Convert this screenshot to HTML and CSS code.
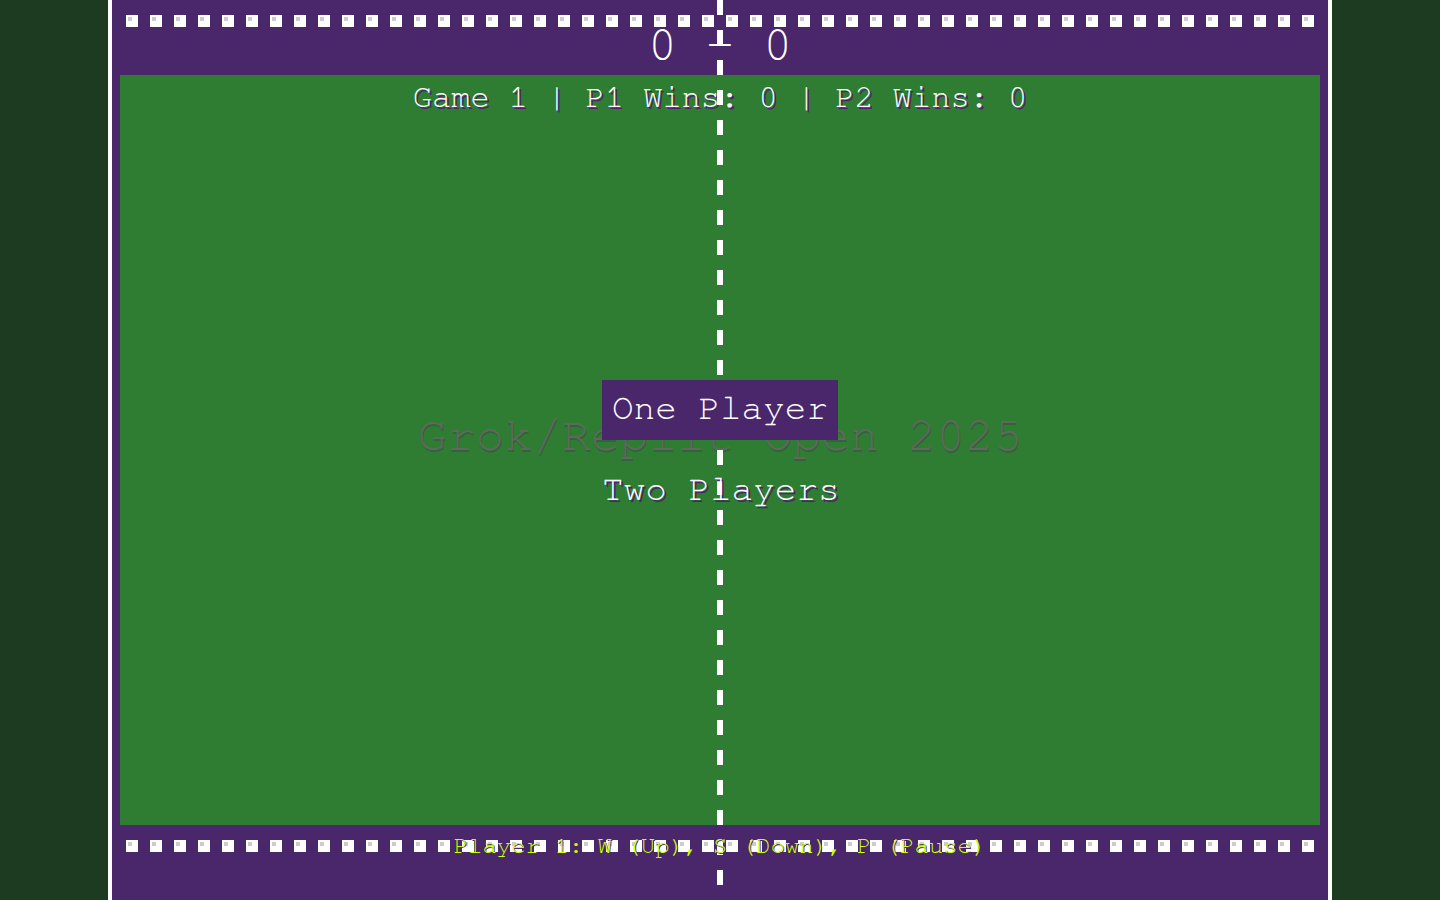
FILE: index.html
```html
<!DOCTYPE html>
<html lang="en">
<head>
<meta charset="utf-8">
<title>Grok/Replit Open 2025 - Pong</title>
<link rel="stylesheet" href="styles.css">
</head>
<body>
<div class="board">
  <div class="center-line"></div>
  <header class="band band-top">
    <div class="dots"></div>
    <div class="score">0 - 0</div>
  </header>
  <main class="field">
    <div class="game-info">Game 1 | P1 Wins: 0 | P2 Wins: 0</div>
    <div class="watermark">Grok/Replit Open 2025</div>
    <div class="menu">
      <div class="menu-item selected">One Player</div>
      <div class="menu-item">Two Players</div>
    </div>
  </main>
  <footer class="band band-bottom">
    <div class="dots"></div>
    <div class="controls">Player 1: W (Up), S (Down), P (Pause)</div>
  </footer>
</div>
</body>
</html>
```
FILE: styles.css
```css
html, body {
  margin: 0;
  padding: 0;
  height: 100%;
}

body {
  background: #1c3b21;
  font-family: "Nimbus Mono PS", "Nimbus Mono L", "FreeMono", "Courier", "Liberation Mono", monospace;
  overflow: hidden;
}

.board {
  position: relative;
  width: 1216px;
  height: 900px;
  margin: 0 auto;
  border-left: 4px solid #ffffff;
  border-right: 4px solid #ffffff;
  background: #4a266b;
  display: flex;
  flex-direction: column;
}

.center-line {
  position: absolute;
  top: 0;
  bottom: 0;
  left: 605px;
  width: 6px;
  background: repeating-linear-gradient(to bottom, #ffffff 0 15px, transparent 15px 30px);
  z-index: 2;
}

.band {
  height: 75px;
  display: grid;
  justify-items: center;
  align-content: start;
}

.dots {
  width: 1188px;
  height: 12px;
  margin-top: 15px;
  grid-area: 1 / 1;
  background-image:
    linear-gradient(to right, #cccccc 0 4px, transparent 4px),
    linear-gradient(to right, #ffffff 0 12px, transparent 12px);
  background-size: 24px 4px, 24px 12px;
  background-position: 2px 2px, 0 0;
  background-repeat: repeat-x, repeat-x;
}

.band-top {
  grid-template-rows: auto auto;
}

.score {
  grid-row: 2;
  grid-column: 1;
  margin-top: -3px;
  color: #ffffff;
  font-size: 48px;
  line-height: 42px;
  white-space: pre;
}

.field {
  position: relative;
  height: 750px;
  margin: 0 8px;
  background: #2e7d32;
  display: flex;
  flex-direction: column;
  align-items: center;
  padding-top: 8px;
  box-sizing: border-box;
}

.game-info {
  margin-top: -2px;
  color: #ffffff;
  font-size: 32px;
  line-height: 33px;
  white-space: pre;
  text-shadow: 2px 2px 0 #4a266b;
}

.watermark {
  position: absolute;
  top: 337px;
  left: 0;
  right: 0;
  text-align: center;
  color: #5d6a55;
  font-size: 48px;
  line-height: 48px;
  white-space: pre;
  text-shadow: 1px 2px 0 rgba(74, 38, 107, 0.35);
}

.menu {
  position: relative;
  z-index: 3;
  margin-top: 266px;
  display: flex;
  flex-direction: column;
  align-items: center;
  gap: 31px;
}

.menu-item {
  width: 236px;
  text-align: center;
  color: #ffffff;
  font-size: 36px;
  line-height: 36px;
  white-space: pre;
  text-shadow: 2px 2px 0 #4a266b;
}

.menu-item.selected {
  background: #4a266b;
  padding: 10px 0 14px;
}

.controls {
  grid-area: 1 / 1;
  position: relative;
  z-index: 3;
  margin-top: 9px;
  color: #ccff00;
  font-size: 24px;
  line-height: 24px;
  white-space: pre;
  text-shadow: 1px 1px 0 #4a266b;
}
```
